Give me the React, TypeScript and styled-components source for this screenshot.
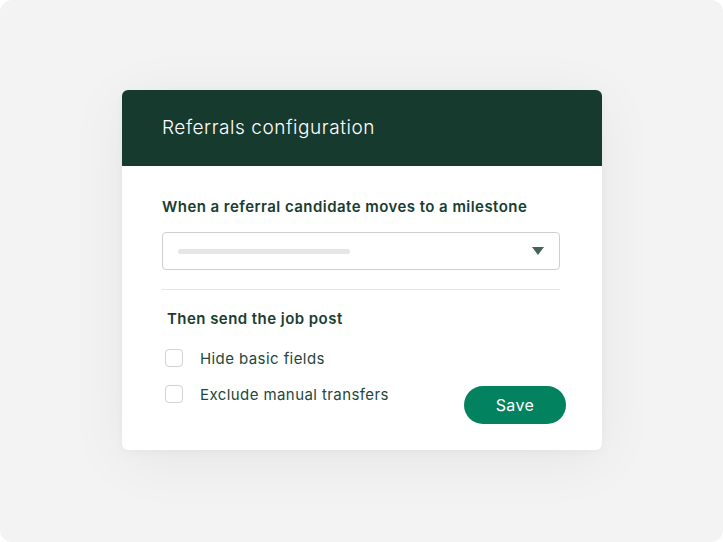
import React from 'react';
import styled, {createGlobalStyle} from 'styled-components';

const GlobalStyle = createGlobalStyle`
  html, body {
    margin: 0;
    padding: 0;
    background: #ffffff;
  }
  body {
    font-family: Inter, "Noto Sans", "Liberation Sans", sans-serif;
    -webkit-font-smoothing: antialiased;
  }
`

const Stage = styled.div`
  width: 723px;
  height: 542px;
  box-sizing: border-box;
  border-radius: 12px;
  background: #f3f3f3;
  padding-top: 90px;
  padding-left: 122px;
  overflow: hidden;
`

const Card = styled.div`
  width: 480px;
  height: 360px;
  border-radius: 6px;
  overflow: hidden;
  background: #ffffff;
  box-shadow: 0 10px 60px rgba(0, 0, 0, 0.06), 0 2px 10px rgba(0, 0, 0, 0.03);
  display: flex;
  flex-direction: column;
`

const Header = styled.div`
  height: 76px;
  background: #173a2f;
  display: flex;
  align-items: center;
  padding: 0 40px 2px;
  box-sizing: border-box;
`

const Title = styled.h2`
  margin: 0;
  color: #ffffff;
  font-size: 19px;
  font-weight: 300;
  letter-spacing: 0.55px;
`

const Body = styled.div`
  padding: 31px 42px 0 40px;
  display: flex;
  flex-direction: column;
`

const Label = styled.div`
  color: #193d31;
  font-size: 15px;
  font-weight: 600;
  line-height: 20px;
  letter-spacing: 0.45px;
  padding-left: ${(p: {$indent?: number}) => p.$indent ?? 0}px;
`

const Select = styled.div`
  margin-top: 15px;
  height: 38px;
  box-sizing: border-box;
  border: 1px solid #cfcfcf;
  border-radius: 4px;
  display: flex;
  align-items: center;
  justify-content: space-between;
  padding: 0 15px 0 15px;
`

const Placeholder = styled.div`
  width: 172px;
  height: 5px;
  border-radius: 3px;
  background: #e6e6e6;
`

const Caret = styled.svg`
  width: 12px;
  height: 8px;
  display: block;
`

const Divider = styled.hr`
  margin: 19px 0 0;
  border: none;
  border-top: 1px solid #e4e4e4;
`

const Section = styled.div`
  margin-top: 19px;
  display: flex;
  justify-content: space-between;
  align-items: flex-start;
`

const Options = styled.div`
  display: flex;
  flex-direction: column;
  padding-left: 3px;
`

const Option = styled.label`
  display: flex;
  align-items: center;
  gap: 17px;
  height: 18px;
  margin-top: ${(p: {$gap: number}) => p.$gap}px;
  color: #24473b;
  font-size: 15px;
  font-weight: 400;
  letter-spacing: 0.42px;
`

const Box = styled.span`
  width: 18px;
  height: 18px;
  box-sizing: border-box;
  border: 1px solid #d2d2d2;
  border-radius: 4px;
  background: #ffffff;
`

const SaveButton = styled.button`
  margin-top: 77px;
  margin-right: -6px;
  width: 102px;
  height: 38px;
  border: none;
  border-radius: 19px;
  background: #03825f;
  color: #ffffff;
  font-family: inherit;
  font-size: 16px;
  font-weight: 400;
  letter-spacing: 0.4px;
  padding: 0 0 1px;
`

export default function App() {
    return (
        <>
            <GlobalStyle/>
            <Stage>
                <Card>
                    <Header>
                        <Title>Referrals configuration</Title>
                    </Header>
                    <Body>
                        <Label>When a referral candidate moves to a milestone</Label>
                        <Select>
                            <Placeholder/>
                            <Caret viewBox="0 0 12 8">
                                <path d="M0 0 H12 L6 8 Z" fill="#46635a"/>
                            </Caret>
                        </Select>
                        <Divider/>
                        <Section>
                            <Options>
                                <Label $indent={2}>Then send the job post</Label>
                                <Option $gap={20}><Box/>Hide basic fields</Option>
                                <Option $gap={18}><Box/>Exclude manual transfers</Option>
                            </Options>
                            <SaveButton>Save</SaveButton>
                        </Section>
                    </Body>
                </Card>
            </Stage>
        </>
    );
}
